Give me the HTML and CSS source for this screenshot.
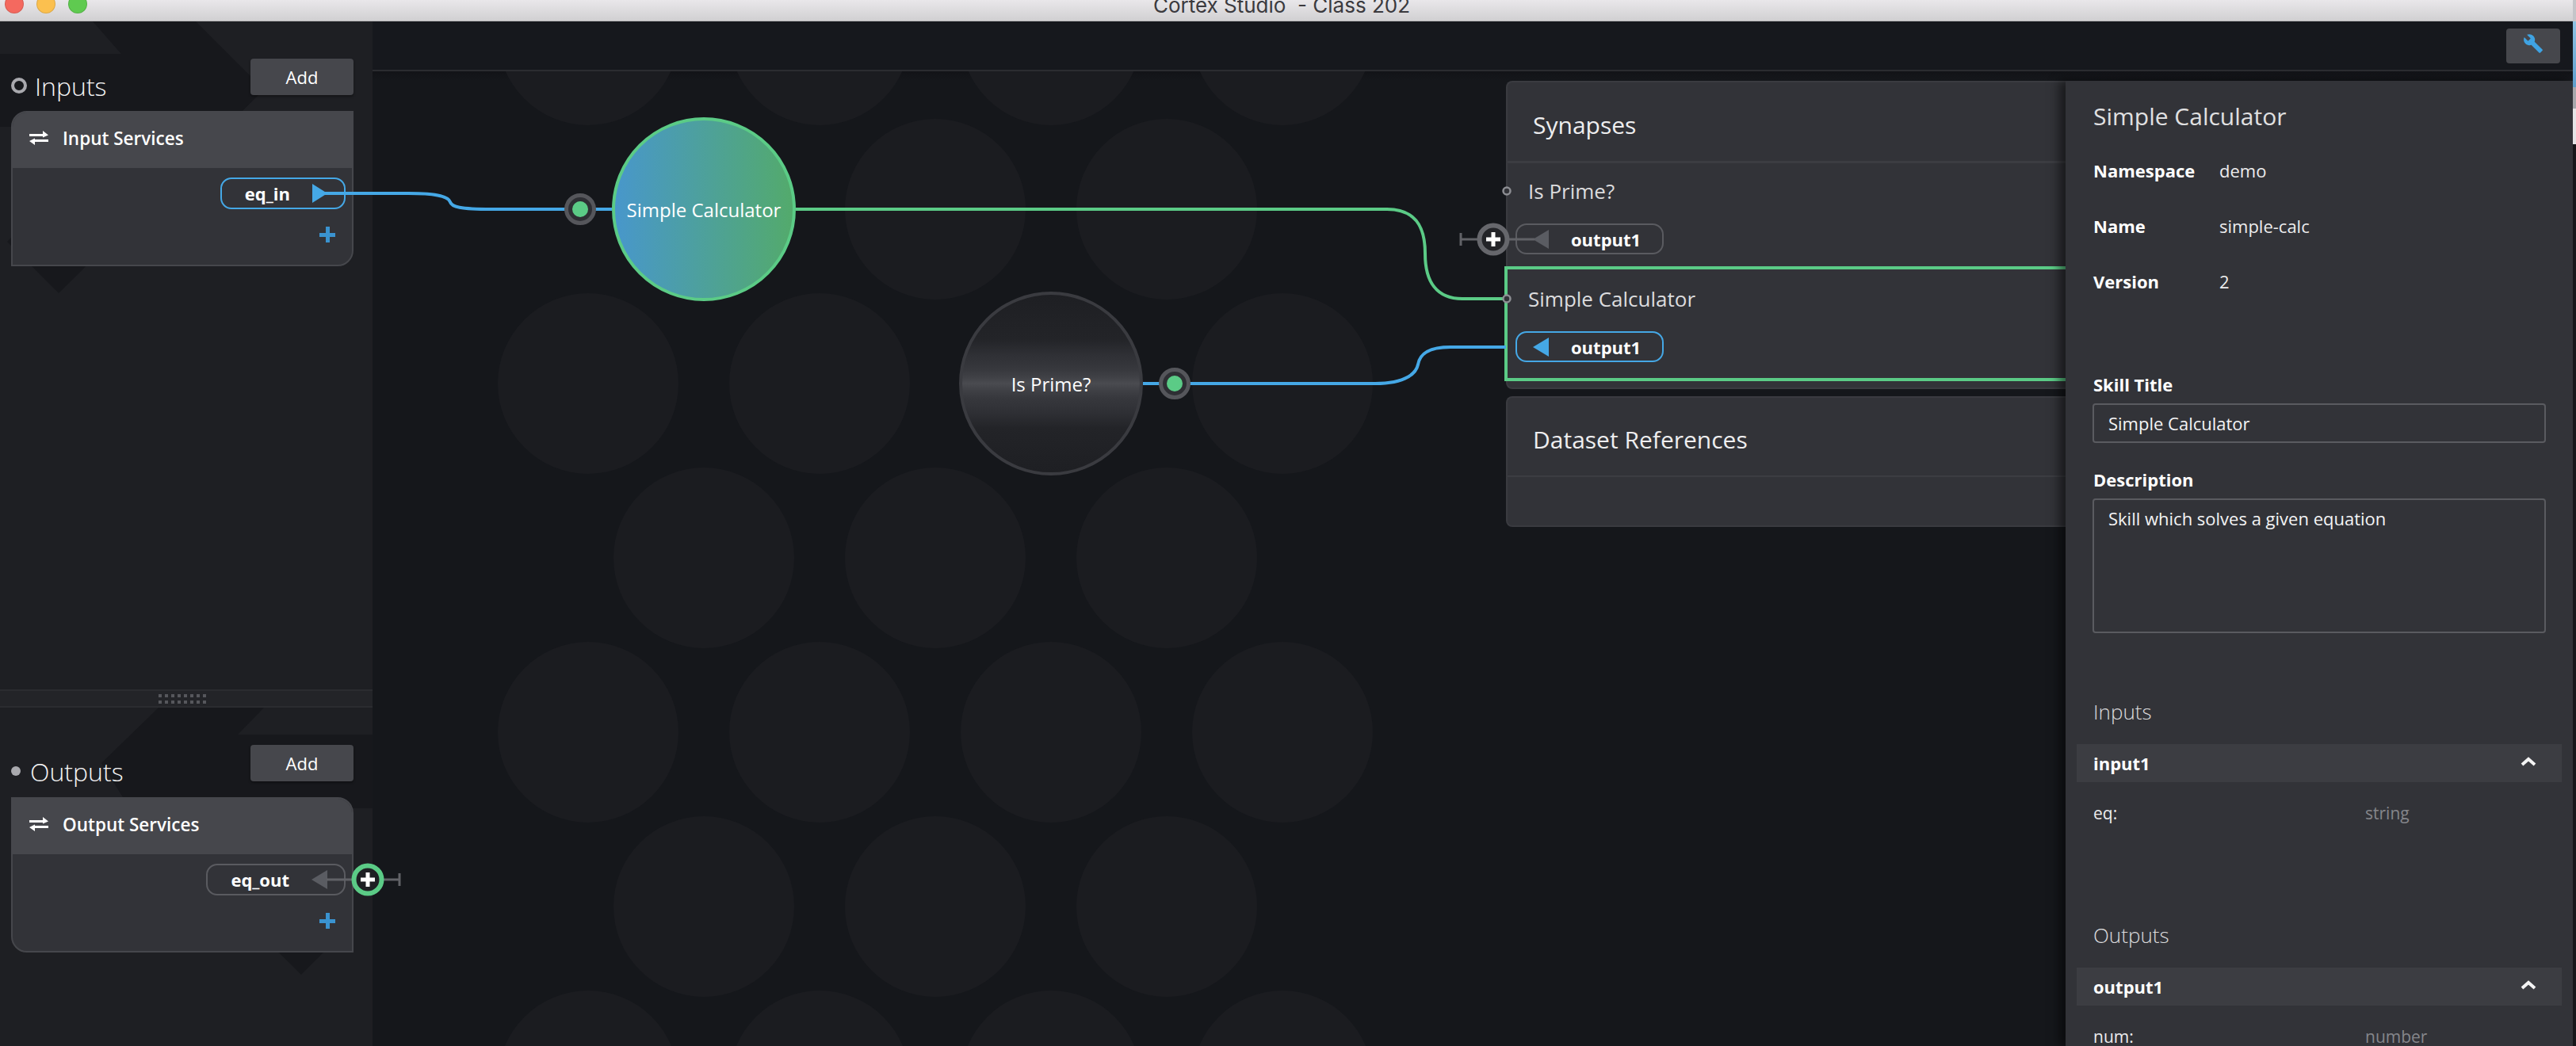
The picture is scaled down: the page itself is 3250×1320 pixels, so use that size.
FILE: index.html
```html
<!DOCTYPE html>
<html lang="en">
<head>
<meta charset="utf-8">
<title>Cortex Studio - Class 202</title>
<link rel="stylesheet" href="styles.css">
</head>
<body>
<div class="screen">
  <div class="window">
    <header class="titlebar">
      <div class="lights"><i class="light light-red"></i><i class="light light-yellow"></i><i class="light light-green"></i></div>
      <div class="title">Cortex Studio  - Class 202</div>
      <div></div>
    </header>
    <div class="app">
      <aside class="sidebar">
        <section class="pane pane-top">
          <svg class="pane-bg" viewBox="0 27 470 843"><polygon points="117,27 247,27 333,113 74,370 9,305 154,160 0,160 0,68 153,68"/></svg>
          <div class="pane-head">
            <div class="pane-label"><i class="ring"></i><span>Inputs</span></div>
            <button class="add-btn">Add</button>
          </div>
          <div class="service-card card-in">
            <div class="service-head">
              <svg class="swap" viewBox="0 0 24 18"><path d="M0 4h17V0l7 5.500L17 8.500V7H0z"/><path d="M24 11H7V9.500L0 13l7 5v-4h17z"/></svg>
              <span>Input Services</span>
            </div>
            <div class="service-body">
              <div class="pill pill-blue"><span>eq_in</span><i class="tri tri-right"></i></div>
              <div class="plus"></div>
            </div>
          </div>
        </section>
        <div class="handle"><div class="grip"></div></div>
        <section class="pane pane-bottom">
          <svg class="pane-bg" viewBox="0 893 470 427"><polygon points="200,893 333,893 300,927 470,927 470,1020 440,1020 440,1170 380,1230 155,1006 128,963"/></svg>
          <div class="pane-head">
            <div class="pane-label label-out"><i class="dot"></i><span>Outputs</span></div>
            <button class="add-btn">Add</button>
          </div>
          <div class="service-card card-out">
            <div class="service-head">
              <svg class="swap" viewBox="0 0 24 18"><path d="M0 4h17V0l7 5.500L17 8.500V7H0z"/><path d="M24 11H7V9.500L0 13l7 5v-4h17z"/></svg>
              <span>Output Services</span>
            </div>
            <div class="service-body">
              <div class="pill pill-grey"><span>eq_out</span><i class="tri tri-left-grey"></i></div>
              <div class="plus"></div>
            </div>
          </div>
        </section>
      </aside>
      <main class="workspace">
        <div class="toolbar">
          <button class="tool-btn" aria-label="Tools">
            <svg viewBox="0 0 24 24"><path d="M22.700 19l-9.100-9.100c.9-2.300.4-5-1.500-6.900-2-2-5-2.400-7.400-1.300L9 6 6 9 1.600 4.700C.4 7.100.9 10.100 2.900 12.100c1.900 1.900 4.600 2.400 6.900 1.500l9.100 9.100c.4.4 1 .4 1.400 0l2.300-2.300c.5-.4.5-1.100.1-1.400z"/></svg>
          </button>
        </div>
        <div class="stage">
          <svg class="honeycomb" viewBox="470 90 2776 1230" preserveAspectRatio="xMinYMin slice">
            <circle cx="742" cy="44" r="114"/><circle cx="1034" cy="44" r="114"/><circle cx="1326" cy="44" r="114"/><circle cx="1618" cy="44" r="114"/>
            <circle cx="888" cy="264" r="114"/><circle cx="1180" cy="264" r="114"/><circle cx="1472" cy="264" r="114"/>
            <circle cx="742" cy="484" r="114"/><circle cx="1034" cy="484" r="114"/><circle cx="1326" cy="484" r="114"/><circle cx="1618" cy="484" r="114"/>
            <circle cx="888" cy="704" r="114"/><circle cx="1180" cy="704" r="114"/><circle cx="1472" cy="704" r="114"/>
            <circle cx="742" cy="924" r="114"/><circle cx="1034" cy="924" r="114"/><circle cx="1326" cy="924" r="114"/><circle cx="1618" cy="924" r="114"/>
            <circle cx="888" cy="1144" r="114"/><circle cx="1180" cy="1144" r="114"/><circle cx="1472" cy="1144" r="114"/>
            <circle cx="742" cy="1364" r="114"/><circle cx="1034" cy="1364" r="114"/><circle cx="1326" cy="1364" r="114"/><circle cx="1618" cy="1364" r="114"/>
          </svg>
          <div class="node node-active">Simple Calculator</div>
          <div class="node node-idle">Is Prime?</div>

          <div class="panels">
            <section class="panel panel-synapses">
              <h2 class="panel-title">Synapses</h2>
              <div class="syn-row">
                <div class="syn-name">Is Prime?</div>
                <div class="pill pill-grey pill-out"><i class="tri tri-left-grey"></i><span>output1</span></div>
              </div>
              <div class="syn-row syn-selected">
                <div class="syn-name">Simple Calculator</div>
                <div class="pill pill-blue pill-out"><i class="tri tri-left"></i><span>output1</span></div>
              </div>
            </section>
            <section class="panel panel-datasets">
              <h2 class="panel-title">Dataset References</h2>
            </section>
          </div>

          <aside class="details">
            <h1 class="details-title">Simple Calculator</h1>
            <dl class="meta">
              <dt>Namespace</dt><dd>demo</dd>
              <dt>Name</dt><dd>simple-calc</dd>
              <dt>Version</dt><dd>2</dd>
            </dl>
            <label class="field-label label-title" for="skill-title">Skill Title</label>
            <input class="field" id="skill-title" value="Simple Calculator">
            <label class="field-label label-desc" for="skill-desc">Description</label>
            <textarea class="field field-area" id="skill-desc">Skill which solves a given equation</textarea>
            <h3 class="sub-title sub-inputs">Inputs</h3>
            <div class="acc-bar"><span>input1</span><svg class="chev" viewBox="0 0 20 12"><polyline points="2,10 10,3 18,10"/></svg></div>
            <div class="param"><span>eq:</span><span class="param-type">string</span></div>
            <h3 class="sub-title sub-outputs">Outputs</h3>
            <div class="acc-bar"><span>output1</span><svg class="chev" viewBox="0 0 20 12"><polyline points="2,10 10,3 18,10"/></svg></div>
            <div class="param"><span>num:</span><span class="param-type">number</span></div>
          </aside>
        </div>
      </main>
    </div>
    <svg class="wires" viewBox="0 0 3246 1320">
      <path class="wire-blue" d="M408 244H515C555 244 566 249 568 255C570 261 580 264 620 264H772"/>
      <path class="wire-green" d="M1004 264H1750C1785 264 1798 285 1798 320C1798 355 1812 377 1845 377H1900"/>
      <path class="wire-blue" d="M1442 484H1735C1775 484 1787 470 1789 460C1791 448 1800 438 1830 438H1900"/>
      <g class="port"><circle class="port-outer" cx="732" cy="264" r="17.500"/><circle class="port-core" cx="732" cy="264" r="10"/></g>
      <g class="port"><circle class="port-outer" cx="1482" cy="484" r="17.500"/><circle class="port-core" cx="1482" cy="484" r="10"/></g>
      <g class="stub"><path d="M1843 294V310M1843 302H1866M1902 302H1936"/><circle class="plus-ring" cx="1884" cy="302" r="17.500"/><path class="plus-mark" d="M1884 293V311M1875 302H1893"/></g>
      <g class="stub"><path d="M504 1102V1118M504 1110H482M446 1110H412"/><circle class="plus-ring plus-ring-green" cx="464" cy="1110" r="17.500"/><path class="plus-mark" d="M464 1101V1119M455 1110H473"/></g>
      <circle class="syn-port" cx="1901" cy="241" r="4.500"/>
      <circle class="syn-port" cx="1901" cy="377" r="4.500"/>
    </svg>
  </div>
  <div class="edge"><i class="edge-a"></i><i class="edge-b"></i><i class="edge-c"></i><i class="edge-d"></i><i class="edge-e"></i></div>
</div>
</body>
</html>
```
FILE: styles.css
```css
* { box-sizing: border-box; }
html, body { margin: 0; height: 100%; background: #16181d; }
body { font-family: "Open Sans", "Noto Sans", sans-serif; color: #fff; overflow: hidden; }
h1, h2, h3, dl, dd { margin: 0; font-weight: inherit; }
button { font-family: inherit; border: 0; padding: 0; color: inherit; }

.screen { display: flex; width: 3250px; height: 1320px; overflow: hidden; }
.window { position: relative; width: 3246px; height: 1320px; display: flex; flex-direction: column; }

.titlebar { height: 27px; flex: none; overflow: hidden; display: grid; grid-template-columns: 1fr auto 1fr; background: linear-gradient(#e9e7ea, #d1d0d2); border-bottom: 1px solid #b6b5b7; }
.lights { display: flex; gap: 16px; margin: -7px 0 0 6px; }
.light { width: 24px; height: 24px; border-radius: 50%; border: 1px solid rgba(0, 0, 0, .12); }
.light-red { background: #f4695f; }
.light-yellow { background: #fbc04f; }
.light-green { background: #5fca50; }
.title { font-family: Inter, "Liberation Sans", sans-serif; font-size: 26px; line-height: 26px; margin: -6.5px 12px 0 0; color: #3b3a3e; white-space: pre; }

.app { flex: 1; display: flex; min-height: 0; }

.sidebar { width: 470px; flex: none; display: flex; flex-direction: column; background: #1e1f23; }
.pane { position: relative; padding: 47px 24px 0 14px; }
.pane-top { height: 843px; }
.pane-bottom { flex: 1; }
.pane-bg { position: absolute; left: 0; top: 0; width: 470px; height: 100%; fill: #17181c; }
.pane-head { position: relative; display: flex; justify-content: space-between; height: 46px; margin-bottom: 20px; }
.pane-label { display: flex; align-items: center; gap: 10px; height: 40px; margin-top: 14px; font-size: 32px; font-weight: 300; color: #f4f4f5; }
.label-out { gap: 12px; margin-top: 13px; }
.ring { width: 20px; height: 20px; border-radius: 50%; border: 4px solid #a9a9ae; }
.dot { width: 12px; height: 12px; border-radius: 50%; background: #a9a9ae; }
.add-btn { width: 130px; height: 46px; border-radius: 4px; background: #46474c; font-size: 22px; box-shadow: 0 2px 3px rgba(0, 0, 0, .35); }

.service-card { position: relative; height: 196px; border: 2px solid #46474c; background: #323338; overflow: hidden; }
.card-in { border-radius: 20px 0 20px 0; }
.card-out { border-radius: 0 20px 0 20px; }
.service-head { height: 70px; display: flex; align-items: center; gap: 18px; padding: 0 0 6px 21px; background: #46474c; font-size: 22.500px; font-weight: 600; }
.swap { width: 24px; height: 18px; fill: #fff; }
.service-body { display: flex; flex-direction: column; align-items: flex-end; padding: 12px 8px 0 0; }

.pill { display: flex; align-items: center; gap: 28px; height: 40px; padding: 0 21px 0 29px; border-radius: 14px; border: 2px solid; font-size: 22px; font-weight: 700; background: #323338; }
.pill-blue { border-color: #45a8e6; }
.pill-grey { border-color: #5a5b60; }
.pill-out { width: 187px; height: 39px; padding: 0 0 0 20px; }
.tri { width: 0; height: 0; border-style: solid; border-color: transparent; }
.tri-right { border-width: 12px 0 12px 19px; border-left-color: #45a8e6; }
.tri-left { border-width: 12px 20px 12px 0; border-right-color: #45a8e6; }
.tri-left-grey { border-width: 12px 20px 12px 0; border-right-color: #5a5c62; }

.plus { position: relative; width: 20px; height: 20px; margin: 22px 13px 0 0; background: linear-gradient(#3a93d0, #3a93d0) center / 100% 5px no-repeat, linear-gradient(#3a93d0, #3a93d0) center / 5px 100% no-repeat; }

.handle { height: 23px; flex: none; display: flex; justify-content: center; align-items: center; padding-right: 10px; background: #232428; border-top: 2px solid #2b2c30; border-bottom: 2px solid #2b2c30; position: relative; }
.grip { width: 60px; height: 12px; background: repeating-linear-gradient(90deg, #56575c 0 4px, transparent 4px 8px); -webkit-mask: repeating-linear-gradient(180deg, #000 0 4px, transparent 4px 8px); mask: repeating-linear-gradient(180deg, #000 0 4px, transparent 4px 8px); }

.workspace { flex: 1; min-width: 0; display: flex; flex-direction: column; background: #15171b; }
.toolbar { height: 63px; flex: none; display: flex; justify-content: flex-end; padding: 9px 16px 0 0; background: #16181d; border-bottom: 2px solid #2b2c30; }
.tool-btn { width: 68px; height: 44px; border-radius: 4px; background: #46474c; display: flex; justify-content: center; align-items: flex-start; padding-top: 6px; }
.tool-btn svg { width: 26px; height: 26px; fill: #3fa3e3; }

.stage { position: relative; flex: 1; min-height: 0; display: flex; justify-content: flex-end; padding-top: 12px; overflow: hidden; background: linear-gradient(#121317, #15171b 12px); }
.honeycomb { position: absolute; left: 0; top: 0; width: 2776px; height: 1230px; fill: #1b1c20; }

.node { position: absolute; z-index: 2; width: 232px; height: 232px; border-radius: 50%; border: 4px solid; display: flex; align-items: center; justify-content: center; font-size: 24px; font-weight: 400; color: #fff; }
.node-active { left: 302px; top: 58px; border-color: #5bcb86; background: linear-gradient(90deg, #4897cb, #53aa6c); }
.node-idle { left: 740px; top: 278px; border-color: #3a3b40; background: linear-gradient(#1e1f23, #232428 25%, #2f3035 34%, #37383d 42%, #3f4045 46%, #4a4b50 50%, #3f4045 54%, #37383d 58%, #2f3035 66%, #232428 75%, #1e1f23); }

.panels { position: relative; width: 706px; flex: none; }
.panel { background: #323338; border: 2px solid #3a3b40; border-right: 0; border-radius: 8px 0 0 8px; }
.panel-title { display: flex; align-items: flex-end; padding: 0 0 25px 32px; font-size: 30px; font-weight: 400; line-height: 40px; color: #eeeeef; border-bottom: 3px solid #3c3d42; }
.panel-synapses { height: 389px; }
.panel-synapses .panel-title { height: 102px; }
.panel-datasets { height: 165px; margin-top: 9px; }
.panel-datasets .panel-title { height: 100px; border-bottom-width: 2px; padding-bottom: 25px; }
.syn-row { height: 132px; padding: 20px 0 0 10px; }
.syn-name { padding-left: 16px; font-size: 26px; line-height: 30px; color: #dcdcde; }
.syn-row .pill { margin-top: 26px; }
.syn-selected { height: 141px; padding: 24px 0 0 12px; outline: 4px solid #5bcb86; outline-offset: -2px; margin: 0 -20px 0 -2px; }
.syn-selected .pill { margin-top: 26px; }

.details { position: relative; z-index: 3; width: 640px; flex: none; padding: 25px 34px 0 35px; background: #323338; box-shadow: -8px 0 12px rgba(0, 0, 0, .5); }
.details-title { font-size: 30px; line-height: 40px; font-weight: 400; color: #e0e0e1; }
.meta { display: grid; grid-template-columns: 159px 1fr; grid-auto-rows: 70px; align-items: center; margin-top: 13px; font-size: 22px; }
.meta dt { font-weight: 700; }
.meta dd { color: #ececed; }
.field-label { display: block; font-size: 22px; line-height: 30px; font-weight: 700; color: #fff; }
.label-title { margin-top: 80px; }
.label-desc { margin-top: 31px; }
.field { display: block; width: 572px; height: 50px; margin: 9px 0 0 -1px; padding: 0 18px; background: #323338; border: 2px solid #5a5b60; border-radius: 4px; font-family: inherit; font-size: 22px; color: #f4f4f5; outline: 0; resize: none; }
.field-area { height: 170px; padding-top: 8px; line-height: 30px; }
.sub-title { font-size: 26px; line-height: 36px; font-weight: 300; color: #dcdcde; }
.sub-inputs { margin-top: 81px; }
.sub-outputs { margin-top: 121px; }
.acc-bar { display: flex; justify-content: space-between; align-items: center; height: 48px; margin: 23px -20px 0 -21px; padding: 0 32px 0 21px; background: #3c3d42; font-size: 22px; font-weight: 700; }
.chev { width: 20px; height: 12px; fill: none; stroke: #f4f4f4; stroke-width: 4; margin-bottom: 4px; }
.param { display: grid; grid-template-columns: 343px 1fr; margin-top: 24px; font-size: 21px; line-height: 30px; color: #ececed; }
.param-type { color: #85868b; }

.wires { position: absolute; left: 0; top: 0; width: 3246px; height: 1320px; z-index: 1; fill: none; pointer-events: none; }
.wire-blue, .wire-green { fill: none; stroke-width: 4; }
.wire-blue { stroke: #45a8e6; }
.wire-green { stroke: #5bcb86; }
.port-outer { fill: #2e2f34; stroke: #55565b; stroke-width: 5; }
.port-core { fill: #5bcb86; }
.stub path { stroke: #616267; stroke-width: 3; }
.plus-ring { fill: #232428; stroke: #66676c; stroke-width: 6; }
.plus-ring-green { stroke: #5bcb86; fill: #1e1f23; }
.stub .plus-mark { stroke: #fff; stroke-width: 5; }
.syn-port { fill: #323338; stroke: #8d8e93; stroke-width: 2.500; }

.edge { width: 4px; display: flex; flex-direction: column; }
.edge i { display: block; }
.edge-a { height: 27px; background: #c4c5c9; }
.edge-b { height: 83px; background: linear-gradient(#8fc3e3, #5f9fcc); }
.edge-c { height: 27px; background: #a7a8ac; }
.edge-d { height: 45px; background: #e4e4e6; }
.edge-e { flex: 1; background: #17171a; }
```
